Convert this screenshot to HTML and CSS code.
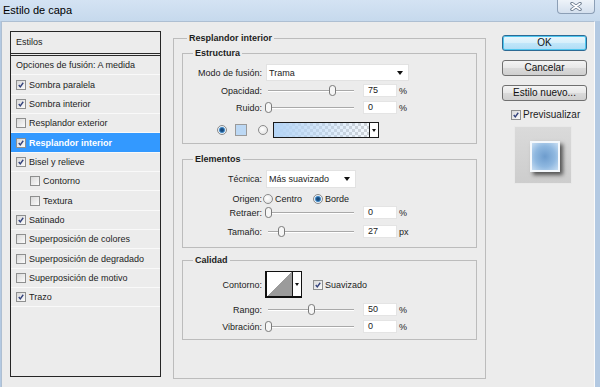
FILE: index.html
```html
<!DOCTYPE html>
<html lang="es">
<head>
  <meta charset="UTF-8">
  <meta name="viewport" content="width=device-width, initial-scale=1.0">
  <title>Estilo de capa</title>
  <link rel="stylesheet" href="styles.css">
</head>
<body>
  <div class="window">
    <div class="titlebar">
      <span class="title">Estilo de capa</span>
      <div class="close">
        <svg width="12" height="9" viewBox="0 0 12 9">
          <path class="x-out" d="M2 1.5l8 6M10 1.5l-8 6"/>
          <path class="x-in" d="M2 1.5l8 6M10 1.5l-8 6"/>
        </svg>
      </div>
    </div>

    <div class="client">
      <!-- Lista de estilos -->
      <div class="styles-list">
        <div class="list-head">Estilos</div>
        <div class="list-row">Opciones de fusión: A medida</div>
        <div class="list-row"><span class="cb on"><svg viewBox="0 0 10 10"><path d="M2.2 5l1.9 2.4L7.8 2.2"/></svg></span>Sombra paralela</div>
        <div class="list-row"><span class="cb on"><svg viewBox="0 0 10 10"><path d="M2.2 5l1.9 2.4L7.8 2.2"/></svg></span>Sombra interior</div>
        <div class="list-row"><span class="cb"></span>Resplandor exterior</div>
        <div class="list-row selected"><span class="cb on"><svg viewBox="0 0 10 10"><path d="M2.2 5l1.9 2.4L7.8 2.2"/></svg></span>Resplandor interior</div>
        <div class="list-row"><span class="cb on"><svg viewBox="0 0 10 10"><path d="M2.2 5l1.9 2.4L7.8 2.2"/></svg></span>Bisel y relieve</div>
        <div class="list-row indent"><span class="cb"></span>Contorno</div>
        <div class="list-row indent"><span class="cb"></span>Textura</div>
        <div class="list-row"><span class="cb on"><svg viewBox="0 0 10 10"><path d="M2.2 5l1.9 2.4L7.8 2.2"/></svg></span>Satinado</div>
        <div class="list-row"><span class="cb"></span>Superposición de colores</div>
        <div class="list-row"><span class="cb"></span>Superposición de degradado</div>
        <div class="list-row"><span class="cb"></span>Superposición de motivo</div>
        <div class="list-row"><span class="cb on"><svg viewBox="0 0 10 10"><path d="M2.2 5l1.9 2.4L7.8 2.2"/></svg></span>Trazo</div>
      </div>

      <!-- Panel principal -->
      <fieldset class="group main">
        <legend>Resplandor interior</legend>

        <fieldset class="group inner estructura">
          <legend>Estructura</legend>
          <div class="row row-mode">
            <span class="lbl">Modo de fusión:</span>
            <div class="select mode">Trama<span class="arrow"></span></div>
          </div>
          <div class="row row-opacity">
            <span class="lbl">Opacidad:</span>
            <div class="slider"><span class="thumb" style="left: 75%"><svg width="7" height="11" viewBox="0 0 7 11"><path d="M.5 3Q.5.5 3.5.5T6.5 3v5q0 2.5-3 2.5T.5 8Z"/></svg></span></div>
            <div class="num">75</div><span class="unit">%</span>
          </div>
          <div class="row row-noise">
            <span class="lbl">Ruido:</span>
            <div class="slider"><span class="thumb" style="left: 0%"><svg width="7" height="11" viewBox="0 0 7 11"><path d="M.5 3Q.5.5 3.5.5T6.5 3v5q0 2.5-3 2.5T.5 8Z"/></svg></span></div>
            <div class="num">0</div><span class="unit">%</span>
          </div>
          <div class="row row-color">
            <span class="radio on"></span>
            <span class="swatch"></span>
            <span class="radio second"></span>
            <div class="gradient"><span class="ramp"></span><span class="drop"><span class="arrow small"></span></span></div>
          </div>
        </fieldset>

        <fieldset class="group inner elementos">
          <legend>Elementos</legend>
          <div class="row row-tech">
            <span class="lbl">Técnica:</span>
            <div class="select tech">Más suavizado<span class="arrow"></span></div>
          </div>
          <div class="row row-origin">
            <span class="lbl">Origen:</span>
            <span class="radio first"></span><span class="opt">Centro</span>
            <span class="radio on second"></span><span class="opt">Borde</span>
          </div>
          <div class="row row-choke">
            <span class="lbl">Retraer:</span>
            <div class="slider"><span class="thumb" style="left: 0%"><svg width="7" height="11" viewBox="0 0 7 11"><path d="M.5 3Q.5.5 3.5.5T6.5 3v5q0 2.5-3 2.5T.5 8Z"/></svg></span></div>
            <div class="num">0</div><span class="unit">%</span>
          </div>
          <div class="row row-size">
            <span class="lbl">Tamaño:</span>
            <div class="slider"><span class="thumb" style="left: 16%"><svg width="7" height="11" viewBox="0 0 7 11"><path d="M.5 3Q.5.5 3.5.5T6.5 3v5q0 2.5-3 2.5T.5 8Z"/></svg></span></div>
            <div class="num">27</div><span class="unit">px</span>
          </div>
        </fieldset>

        <fieldset class="group inner calidad">
          <legend>Calidad</legend>
          <div class="row row-contour">
            <span class="lbl">Contorno:</span>
            <div class="contour"><span class="curve"></span><span class="drop"><span class="arrow small"></span></span></div>
            <span class="cb on"><svg viewBox="0 0 10 10"><path d="M2.2 5l1.9 2.4L7.8 2.2"/></svg></span><span class="opt">Suavizado</span>
          </div>
          <div class="row row-range">
            <span class="lbl">Rango:</span>
            <div class="slider"><span class="thumb" style="left: 50%"><svg width="7" height="11" viewBox="0 0 7 11"><path d="M.5 3Q.5.5 3.5.5T6.5 3v5q0 2.5-3 2.5T.5 8Z"/></svg></span></div>
            <div class="num">50</div><span class="unit">%</span>
          </div>
          <div class="row row-jitter">
            <span class="lbl">Vibración:</span>
            <div class="slider"><span class="thumb" style="left: 0%"><svg width="7" height="11" viewBox="0 0 7 11"><path d="M.5 3Q.5.5 3.5.5T6.5 3v5q0 2.5-3 2.5T.5 8Z"/></svg></span></div>
            <div class="num">0</div><span class="unit">%</span>
          </div>
        </fieldset>
      </fieldset>

      <!-- Botones -->
      <div class="side">
        <div class="btn default">OK</div>
        <div class="btn">Cancelar</div>
        <div class="btn">Estilo nuevo...</div>
        <div class="preview-check">
          <span class="cb on"><svg viewBox="0 0 10 10"><path d="M2.2 5l1.9 2.4L7.8 2.2"/></svg></span><span class="opt">Previsualizar</span>
        </div>
        <div class="preview"><div class="preview-square"></div></div>
      </div>
    </div>
  </div>
</body>
</html>
```

FILE: styles.css
```css
* {
  box-sizing: border-box;
}
body {
  margin: 0;
  font-family: "Liberation Sans", Arial, sans-serif;
  font-size: 9px;
  color: #1c1c1c;
}
.window {
  width: 600px;
  height: 387px;
  background: #b3c9e2;
  overflow: hidden;
}

/* barra de titulo */
.titlebar {
  height: 21px;
  display: flex;
  justify-content: space-between;
  background: linear-gradient(#d4e3f3, #c6d9ed);
}
.title {
  padding-left: 3px;
  line-height: 20px;
  font-size: 11px;
  color: #000;
}
.close {
  width: 38px;
  height: 14px;
  margin-right: 5px;
  border: 1px solid #8c9fb6;
  border-top: none;
  border-radius: 0 0 4px 4px;
  background: linear-gradient(#eef3f9, #d4e0ee);
  display: flex;
  align-items: center;
  justify-content: center;
}
.close svg {
  display: block;
}
.x-out {
  stroke: #66768a;
  stroke-width: 3.4;
  stroke-linecap: round;
}
.x-in {
  stroke: #fff;
  stroke-width: 1.6;
  stroke-linecap: round;
}

.client {
  height: 366px;
  margin: 0 5px 0 1px;
  background: #ececec;
  border-top: 1px solid #aebfd2;
  border-left: 1px solid #aebfd2;
  border-right: 1px solid #fbfbfb;
  display: flex;
  align-items: flex-start;
}

/* lista de estilos */
.styles-list {
  width: 151px;
  height: 346px;
  margin: 9px 0 0 8px;
  border: 1px solid #262626;
  flex: none;
}
.list-head {
  height: 24px;
  padding: 5px 0 0 5px;
  border-bottom: 3px double #2a2a2a;
}
.list-row {
  height: 19px;
  display: flex;
  align-items: center;
  padding-left: 5px;
  border-bottom: 1px solid #f9f9f9;
  white-space: nowrap;
}
.list-row:nth-child(3n) {
  height: 20px;
}
.list-row.indent {
  padding-left: 19px;
}
.list-row.selected {
  background: #3399ff;
  color: #fff;
  font-weight: bold;
}
.list-row .cb {
  margin-right: 3px;
}

/* casillas y radios */
.cb {
  width: 10px;
  height: 10px;
  flex: none;
  border: 1px solid #8e8f8f;
  background: linear-gradient(135deg, #d9d9d9, #fbfbfb);
  display: inline-block;
}
.cb svg {
  display: block;
  width: 8px;
  height: 8px;
}
.cb svg path {
  fill: none;
  stroke: #33427c;
  stroke-width: 1.7;
}
.radio {
  width: 10px;
  height: 10px;
  flex: none;
  border: 1px solid #8a8a8a;
  border-radius: 50%;
  background: radial-gradient(circle at 40% 40%, #fff, #dcdcdc);
}
.radio.on {
  background: radial-gradient(circle, #163f6b 0, #1f5a92 1.8px, #5d9fd6 2.8px, #e8f0f8 3.4px);
}
.opt {
  margin-left: 2px;
}

/* grupos */
.group {
  margin: 0;
  padding: 0;
  min-width: 0;
  border: 1px solid #bcbcbc;
}
.group legend {
  padding: 0 2px;
  line-height: 11px;
  font-weight: bold;
}
.main {
  width: 313px;
  height: 346px;
  margin: 11px 0 0 12px;
  flex: none;
}
.main > legend {
  margin-left: 13px;
}
.inner {
  width: 295px;
  margin-left: 8px;
}
.inner > legend {
  margin-left: 10px;
}
.estructura {
  margin-top: 4px;
  padding-bottom: 5px;
}
.elementos {
  margin-top: 10px;
  padding-bottom: 9px;
}
.calidad {
  margin-top: 7px;
  padding-bottom: 6px;
}

/* filas */
.row {
  display: flex;
  align-items: center;
  height: 13px;
  white-space: nowrap;
}
.lbl {
  width: 79px;
  flex: none;
  text-align: right;
}
.row-mode {
  height: 17px;
  margin-top: 5px;
}
.row-opacity {
  margin-top: 3px;
}
.row-noise {
  margin-top: 4px;
}
.row-color {
  height: 16px;
  margin-top: 8px;
}
.row-tech {
  height: 18px;
  margin-top: 5px;
}
.row-origin {
  margin-top: 4px;
}
.row-choke {
  margin-top: 1px;
}
.row-size {
  margin-top: 6px;
}
.row-contour {
  height: 27px;
  margin-top: 5px;
}
.row-range {
  margin-top: 5px;
}
.row-jitter {
  margin-top: 4px;
}

.select {
  height: 100%;
  margin-left: 4px;
  padding: 0 5px 0 2px;
  background: #fff;
  border: 1px solid #e2e2e2;
  display: flex;
  align-items: center;
  justify-content: space-between;
}
.select.mode {
  width: 143px;
}
.select.tech {
  width: 90px;
}
.arrow {
  width: 0;
  height: 0;
  border-top: 4px solid #111;
  border-left: 3.5px solid transparent;
  border-right: 3.5px solid transparent;
}
.arrow.small {
  border-top-width: 3px;
  border-left-width: 2.5px;
  border-right-width: 2.5px;
}

.slider {
  position: relative;
  width: 86px;
  height: 13px;
  margin-left: 6px;
  flex: none;
}
.slider::before {
  content: "";
  position: absolute;
  left: 0;
  right: 0;
  top: 6px;
  height: 1px;
  background: #a9a9a9;
  box-shadow: 0 1px 0 #fff;
}
.thumb {
  position: absolute;
  top: 1px;
  margin-left: -3.5px;
  width: 7px;
  height: 11px;
}
.thumb svg {
  display: block;
}
.thumb path {
  fill: #f6f6f6;
  stroke: #7b7b7b;
  stroke-width: 1;
}
.num {
  width: 34px;
  height: 13px;
  margin-left: 9px;
  padding-left: 4px;
  background: #fff;
  border: 1px solid #e4e4e4;
  line-height: 11px;
}
.unit {
  margin-left: 2px;
}

.row-color .radio.on {
  margin-left: 34px;
}
.swatch {
  width: 12px;
  height: 12px;
  margin-left: 8px;
  border: 1px solid #9a9a9a;
  background: #bcd8f4;
}
.row-color .radio.second {
  margin-left: 11px;
}
.gradient {
  width: 106px;
  height: 16px;
  margin-left: 5px;
  border: 1px solid #1a1a1a;
  display: flex;
}
.gradient .ramp {
  flex: 1;
  background: linear-gradient(to right, #b5d5f6, rgba(181, 213, 246, 0.15)),
    repeating-conic-gradient(#fff 0 25%, #d2d2d2 0 50%) 0 0 / 6px 6px;
}
.drop {
  width: 9px;
  border-left: 1px solid #1a1a1a;
  background: #fff;
  display: flex;
  align-items: center;
  justify-content: center;
}

.row-origin .radio.first {
  margin-left: 1px;
}
.row-origin .radio.second {
  margin-left: 11px;
}

.contour {
  width: 37px;
  height: 27px;
  margin-left: 3px;
  border: 1px solid #111;
  border-width: 1px 1px 2px 2px;
  display: flex;
}
.contour .curve {
  flex: 1;
  background: linear-gradient(to top left, #9b9b9b 50%, #fff 50%);
}
.row-contour .cb {
  margin-left: 11px;
}

/* columna derecha */
.side {
  width: 85px;
  margin: 13px 0 0 16px;
  flex: none;
}
.btn {
  height: 16px;
  margin-bottom: 9px;
  border: 1px solid #707070;
  border-radius: 3px;
  background: linear-gradient(#f4f4f4, #e8e8e8 48%, #dadada 52%, #cfcfcf);
  font-size: 10px;
  line-height: 14px;
  text-align: center;
  color: #111;
}
.btn.default {
  border-color: #2d6a94;
  box-shadow: inset 0 0 0 1px #4fc6ee;
  background: linear-gradient(#eaf7fd, #d6effb 48%, #c0e6fa 52%, #aedcf5);
}
.preview-check {
  display: flex;
  align-items: center;
  height: 11px;
  margin: -1px 0 0 9px;
  font-size: 10px;
  white-space: nowrap;
}
.preview {
  width: 58px;
  height: 58px;
  margin: 6px 0 0 12px;
  border: 1px solid #e9e9e9;
  background: linear-gradient(#dadada, #cdcdcd);
  display: flex;
  align-items: center;
  justify-content: center;
}
.preview-square {
  width: 30px;
  height: 31px;
  margin: 3px 0 0 3px;
  border: 2px solid #f4f8fc;
  background: radial-gradient(#6d9ccd, #8fb8e0 55%, #c8def3);
  box-shadow: 3px 3px 4px rgba(0, 0, 0, 0.6);
}
```
